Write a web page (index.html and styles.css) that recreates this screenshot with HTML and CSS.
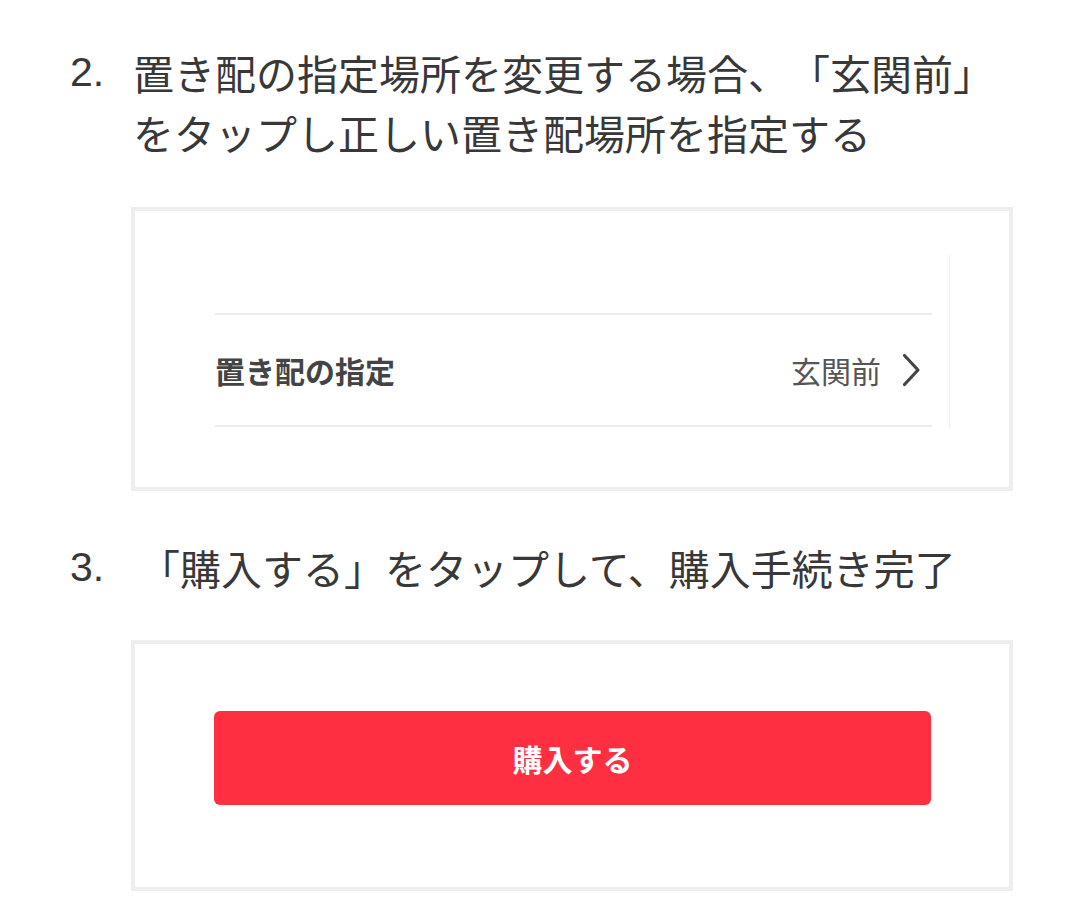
FILE: index.html
```html
<!doctype html>
<html lang="ja">
<head>
  <meta charset="utf-8">
  <meta name="viewport" content="width=device-width, initial-scale=1.0">
  <title>置き配の指定方法</title>
  <link rel="stylesheet" href="styles.css">
</head>
<body>

<div class="guide">

  <div class="step">
    <div class="step-title">
      <span class="step-num">2.</span>
      <p class="step-text">置き配の指定場所を変更する場合、「玄関前」<br>をタップし正しい置き配場所を指定する</p>
    </div>

    <div class="shot shot-option">
      <div class="option-panel">
        <div class="option-row">
          <span class="option-label">置き配の指定</span>
          <span class="option-value">玄関前</span>
          <svg class="chevron" width="20" height="34" viewBox="0 0 20 34" aria-hidden="true">
            <path d="M3.5 2.5 L17 17 L3.5 31.5" fill="none" stroke="#454545" stroke-width="3.2" stroke-linecap="round" stroke-linejoin="round"/>
          </svg>
        </div>
      </div>
    </div>
  </div>

  <div class="step">
    <div class="step-title">
      <span class="step-num">3.</span>
      <p class="step-text step-text-wide">「購入する」をタップして、購入手続き完了</p>
    </div>

    <div class="shot shot-buy">
      <button type="button" class="buy-btn">購入する</button>
    </div>
  </div>

</div>

</body>
</html>
```

FILE: styles.css
```css
body {
  margin: 0;
  background: #ffffff;
  font-family: "Noto Sans CJK JP", sans-serif;
  color: #333;
}

.guide {
  padding: 42px 0 0 70px;
}

.step-title {
  display: grid;
  grid-template-columns: 63px 1fr;
  font-size: 41px;
  line-height: 60px;
  color: #383838;
}

.step-num {
  font-family: "Liberation Sans", "Noto Sans CJK JP", sans-serif;
}

/* keep every punctuation mark full width, as the phone UI does */
.step-text {
  margin: 0;
  white-space: nowrap;
  text-spacing-trim: space-all;
}

.step-text-wide {
  padding-left: 6px;
}

/* screenshot frames under each step */
.shot {
  box-sizing: border-box;
  width: 882px;
  margin-left: 61px;
  border: 4px solid #eeeeee;
  background: #ffffff;
}

.shot-option {
  margin-top: 45px;
  margin-bottom: 46px;
  padding: 44px 0 59px 80px;
}

.option-panel {
  width: 734px;
  padding-top: 58px;
  padding-bottom: 1px;
  border-right: 1px solid #efefef;
}

.option-row {
  display: flex;
  align-items: center;
  height: 110px;
  margin-right: 17px;
  padding-right: 11px;
  border-top: 2px solid #ececec;
  border-bottom: 2px solid #ececec;
}

.option-label {
  flex: 1;
  font-size: 30px;
  font-weight: 700;
  color: #444444;
}

.option-value {
  font-size: 30px;
  color: #555555;
  margin-right: 20px;
}

.chevron {
  display: block;
}

.shot-buy {
  margin-top: 43px;
  padding: 67px 0 82px 79px;
}

.buy-btn {
  display: block;
  width: 717px;
  height: 94px;
  border: none;
  border-radius: 6px;
  background: #fd2f41;
  color: #ffffff;
  font-family: "Noto Sans CJK JP", sans-serif;
  font-size: 30px;
  font-weight: 700;
  cursor: pointer;
}
```
